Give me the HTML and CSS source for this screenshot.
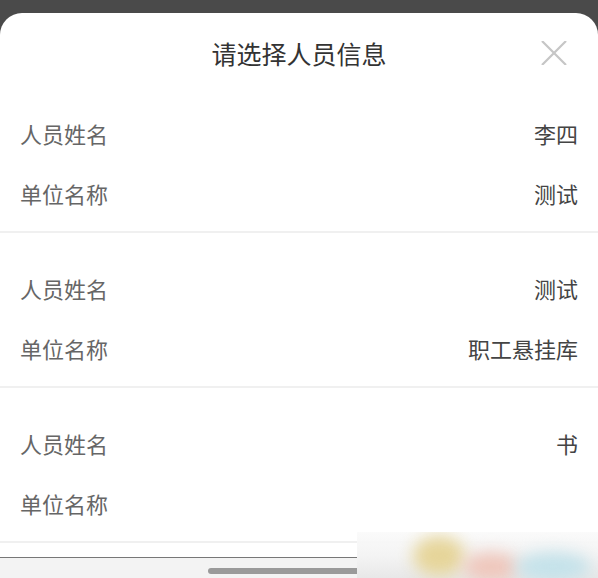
FILE: index.html
```html
<!DOCTYPE html>
<html lang="zh-CN">
<head>
    <meta charset="UTF-8">
    <meta name="viewport" content="width=device-width, initial-scale=1.0">
    <title>请选择人员信息</title>
    <link rel="stylesheet" href="styles.css">
</head>
<body>
    <div class="mask"></div>
    <div class="sheet">
        <div class="sheet-header">
            <span></span>
            <h1>请选择人员信息</h1>
            <button class="close" aria-label="关闭">
                <svg width="26" height="24" viewBox="0 0 26 24">
                    <path d="M1 0 L25 24 M25 0 L1 24" stroke="#c6c6c6" stroke-width="2.2" fill="none"/>
                </svg>
            </button>
        </div>

        <div class="group">
            <div class="row"><span class="label">人员姓名</span><span class="value">李四</span></div>
            <div class="row"><span class="label">单位名称</span><span class="value">测试</span></div>
        </div>
        <div class="group">
            <div class="row"><span class="label">人员姓名</span><span class="value">测试</span></div>
            <div class="row"><span class="label">单位名称</span><span class="value">职工悬挂库</span></div>
        </div>
        <div class="group">
            <div class="row"><span class="label">人员姓名</span><span class="value">书</span></div>
            <div class="row"><span class="label">单位名称</span><span class="value"></span></div>
        </div>
        <div class="group"></div>
    </div>
    <div class="footer">
        <div class="home-bar"></div>
    </div>

    <!-- 右下角模糊水印 -->
    <div class="watermark">
        <span class="blob yellow"></span>
        <span class="blob pink"></span>
        <span class="blob blue"></span>
    </div>
</body>
</html>
```

FILE: styles.css
```css
html, body {
    height: 100%;
}
body {
    margin: 0;
    font-family: "Noto Sans CJK SC", "Noto Sans", sans-serif;
    background-color: #4a4a4a;
    display: flex;
    flex-direction: column;
    overflow: hidden;
    position: relative;
}
.mask {
    height: 13px;
    flex: none;
}
.sheet {
    flex: 1;
    background: #fff;
    border-radius: 22px 22px 0 0;
    overflow: hidden;
}
.sheet-header {
    display: grid;
    grid-template-columns: 1fr auto 1fr;
    align-items: center;
    padding: 22px 0 7px;
    height: 36px;
}
.sheet-header h1 {
    margin: 0;
    font-size: 25px;
    font-weight: normal;
    color: #333;
    line-height: 36px;
}
.close {
    justify-self: end;
    margin-right: 31px;
    border: none;
    background: none;
    padding: 0;
    display: flex;
    cursor: pointer;
}
.group {
    padding: 25px 0 8px;
    border-bottom: 2px solid #f0f0f0;
}
.row {
    display: flex;
    justify-content: space-between;
    align-items: center;
    height: 60px;
    padding: 0 20px;
    font-size: 22px;
}
.label {
    color: #666;
}
.value {
    color: #444;
}
.footer {
    flex: none;
    height: 20px;
    border-top: 1px solid #777;
    background: #f3f3f3;
}
.home-bar {
    width: 182px;
    height: 6px;
    margin: 10px auto 0;
    border-radius: 3px;
    background: #9a9a9a;
}
.watermark {
    position: absolute;
    right: 0;
    bottom: 0;
    width: 241px;
    height: 46px;
    background: linear-gradient(180deg, rgba(250, 250, 250, 0.9) 0%, #f4f4f4 50%, #e8e8e8 100%);
    overflow: hidden;
}
.blob {
    position: absolute;
    border-radius: 50%;
    filter: blur(8px);
}
.yellow {
    left: 56px;
    top: 4px;
    width: 52px;
    height: 40px;
    background: #e6d59a;
}
.pink {
    left: 106px;
    top: 20px;
    width: 56px;
    height: 30px;
    background: #efc7bc;
}
.blue {
    left: 158px;
    top: 20px;
    width: 76px;
    height: 30px;
    background: #c4e2ea;
}
```
